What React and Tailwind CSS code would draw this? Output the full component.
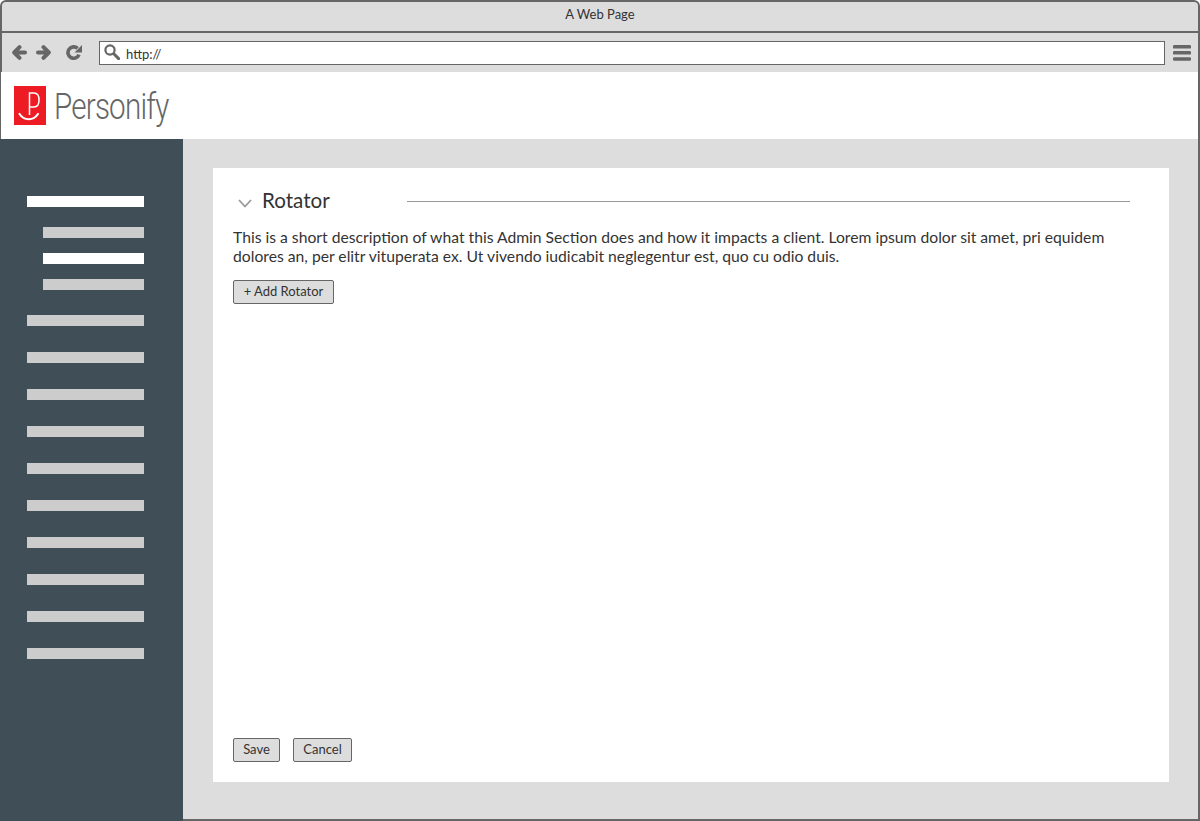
const navBars = [
  "bg-white w-[117px] ml-[27px] mt-[57px]",
  "bg-[#cccccc] w-[101px] ml-[43px] mt-[20px]",
  "bg-white w-[101px] ml-[43px] mt-[15px]",
  "bg-[#cccccc] w-[101px] ml-[43px] mt-[15px]",
  "bg-[#cccccc] w-[117px] ml-[27px] mt-[25px]",
  "bg-[#cccccc] w-[117px] ml-[27px] mt-[26px]",
  "bg-[#cccccc] w-[117px] ml-[27px] mt-[26px]",
  "bg-[#cccccc] w-[117px] ml-[27px] mt-[26px]",
  "bg-[#cccccc] w-[117px] ml-[27px] mt-[26px]",
  "bg-[#cccccc] w-[117px] ml-[27px] mt-[26px]",
  "bg-[#cccccc] w-[117px] ml-[27px] mt-[26px]",
  "bg-[#cccccc] w-[117px] ml-[27px] mt-[26px]",
  "bg-[#cccccc] w-[117px] ml-[27px] mt-[26px]",
  "bg-[#cccccc] w-[117px] ml-[27px] mt-[26px]",
];

function Logo() {
  return (
    <svg width="32" height="39" viewBox="0 0 32 39" className="shrink-0">
      <rect width="32" height="39" fill="#ed1c24" />
      <path
        d="M15.5 29V7H20C23.5 7 25 10 25 14C25 18 23.5 21 20 21H15.5"
        fill="none"
        stroke="#fff"
        strokeWidth="1.5"
      />
      <path d="M5 27.3C10 35.3 19.5 35.3 24.5 27.3" fill="none" stroke="#fff" strokeWidth="2" />
    </svg>
  );
}

function ArrowIcon({ flip, className }) {
  return (
    <svg width="16" height="15" viewBox="0 0 16 15" className={`shrink-0 ${flip ? "-scale-x-100" : ""} ${className}`}>
      <path d="M14 7.5H4M8.5 2.2L3.2 7.5L8.5 12.8" fill="none" stroke="#666666" strokeWidth="4" strokeLinecap="round" strokeLinejoin="round" />
    </svg>
  );
}

function RefreshIcon({ className }) {
  return (
    <svg width="16" height="15" viewBox="0 0 16 15" className={`shrink-0 ${className}`}>
      <path d="M13 9.6A5.7 5.7 0 1 1 11.6 3.4" fill="none" stroke="#666666" strokeWidth="3.6" />
      <path d="M16 0V7.4H8.6Z" fill="#666666" />
    </svg>
  );
}

function SearchIcon({ className }) {
  return (
    <svg width="16" height="16" viewBox="0 0 16 16" className={`shrink-0 ${className}`}>
      <circle cx="6" cy="6" r="4.6" fill="none" stroke="#666666" strokeWidth="2.2" />
      <path d="M9.8 9.8L14.6 14.6" stroke="#666666" strokeWidth="3" strokeLinecap="round" />
    </svg>
  );
}

function MenuIcon({ className }) {
  return (
    <svg width="18" height="16" viewBox="0 0 18 16" className={`shrink-0 ${className}`}>
      <rect y="0" width="18" height="3.6" rx="1.2" fill="#666666" />
      <rect y="6" width="18" height="3.6" rx="1.2" fill="#666666" />
      <rect y="12.2" width="18" height="3.6" rx="1.2" fill="#666666" />
    </svg>
  );
}

function Btn({ children, className }) {
  return (
    <button className={`h-6 pb-[2px] bg-[#dddddd] border border-[#666666] rounded-[2px] text-[13px] leading-none text-[#333333] ${className}`}>
      {children}
    </button>
  );
}

export default function App() {
  return (
    <div className="w-[1200px] h-[821px] flex flex-col overflow-hidden font-['Lato',sans-serif] text-[#333333]">
      {/* Browser chrome */}
      <div className="h-[33px] shrink-0 bg-[#dddddd] border-t-2 border-x-2 border-b-2 border-[#666666] rounded-t-md flex items-center justify-center">
        <span className="text-[13px] text-[#333333] -mt-[3px]">A Web Page</span>
      </div>
      <div className="h-[39px] shrink-0 bg-[#dddddd] border-x-2 border-[#666666] flex items-center pl-[9px]">
        <ArrowIcon />
        <ArrowIcon flip className="ml-[9px]" />
        <RefreshIcon className="ml-[14px]" />
        <div className="w-[1066px] h-6 ml-[17px] bg-white border border-[#666666] flex items-center pl-1">
          <SearchIcon className="-mt-[1px]" />
          <span className="ml-[6px] text-[13px] leading-none mt-1 text-[#333333]">http://</span>
        </div>
        <MenuIcon className="ml-2" />
      </div>

      {/* Logo bar */}
      <div className="h-[67px] shrink-0 bg-white border-l border-r-2 border-[#666666] flex items-center pl-[13px]">
        <Logo />
        <span className="ml-2 mt-[1px] font-['Roboto',sans-serif] font-light text-[37px] leading-none text-[#666666] tracking-[-1px] origin-left scale-x-[0.8]">
          Personify
        </span>
      </div>

      <div className="flex-1 flex min-h-0">
        {/* Sidebar */}
        <div className="w-[183px] shrink-0 bg-[#3f4e57] flex flex-col">
          {navBars.map((bar, i) => (
            <div key={i} className={`h-[11px] ${bar}`} />
          ))}
        </div>

        {/* Content */}
        <div className="flex-1 bg-[#dddddd] border-r-2 border-b-2 border-[#666666] pt-[29px] pl-[30px] pr-[29px] pb-[37px]">
          <div className="h-full bg-white flex flex-col pl-5 pr-[39px] pt-5 pb-5">
            <div className="flex items-center h-[26px]">
              <svg width="14" height="9" viewBox="0 0 14 9" className="ml-[5px] mt-1 shrink-0">
                <path d="M1 1L7 7.5L13 1" fill="none" stroke="#999999" strokeWidth="1.8" />
              </svg>
              <h2 className="ml-[10px] w-[145px] shrink-0 text-[20.6px] -mt-[2px] text-[#333333]">Rotator</h2>
              <div className="flex-1 h-px bg-[#999999]" />
            </div>
            <p className="mt-[14px] text-[15.7px] leading-[19px] text-[#333333]">
              This is a short description of what this Admin Section does and how it impacts a client. Lorem ipsum dolor sit amet, pri equidem dolores an, per elitr vituperata ex. Ut vivendo iudicabit neglegentur est, quo cu odio duis.
            </p>
            <div className="mt-[14px] flex">
              <Btn className="w-[101px]">+ Add Rotator</Btn>
            </div>
            <div className="mt-auto flex gap-[13px]">
              <Btn className="w-[47px]">Save</Btn>
              <Btn className="w-[59px]">Cancel</Btn>
            </div>
          </div>
        </div>
      </div>
    </div>
  );
}
